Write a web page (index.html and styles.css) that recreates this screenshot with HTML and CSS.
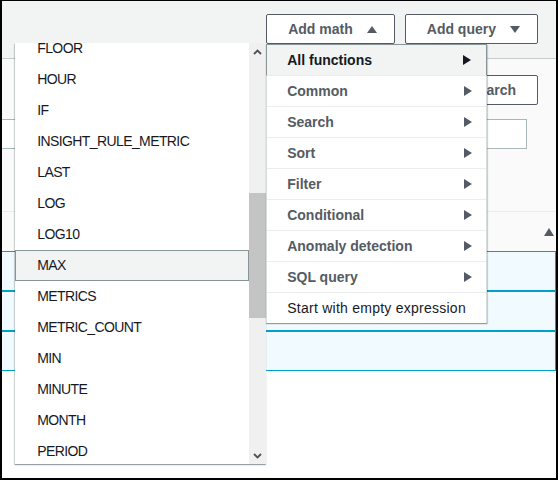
FILE: index.html
```html
<!DOCTYPE html>
<html lang="en">
<head>
    <meta charset="UTF-8">
    <meta name="viewport" content="width=device-width, initial-scale=1.0">
    <title>Add math</title>
    <link rel="stylesheet" href="styles.css">
</head>
<body>
    <div class="frame">
        <div class="toolbar">
            <div class="dropdown">
                <button class="btn">Add math
                    <svg width="10" height="7" viewBox="0 0 10 7"><polygon points="0,7 5,0 10,7" fill="#545b64"/></svg>
                </button>

                <!-- function list with its own scrollbar -->
                <div class="fnlist">
                    <ul class="fnitems">
                        <li class="first">FLOOR</li>
                        <li>HOUR</li>
                        <li>IF</li>
                        <li>INSIGHT_RULE_METRIC</li>
                        <li>LAST</li>
                        <li>LOG</li>
                        <li>LOG10</li>
                        <li class="hover">MAX</li>
                        <li>METRICS</li>
                        <li>METRIC_COUNT</li>
                        <li>MIN</li>
                        <li>MINUTE</li>
                        <li>MONTH</li>
                        <li>PERIOD</li>
                    </ul>
                    <div class="scrollbar">
                        <div class="sbbtn">
                            <svg width="9" height="6" viewBox="0 0 9 6"><polyline points="1,5 4.5,1.5 8,5" fill="none" stroke="#505050" stroke-width="1.8"/></svg>
                        </div>
                        <div class="sbtrack"><div class="sbthumb"></div></div>
                        <div class="sbbtn">
                            <svg width="9" height="6" viewBox="0 0 9 6"><polyline points="1,1 4.5,4.5 8,1" fill="none" stroke="#505050" stroke-width="1.8"/></svg>
                        </div>
                    </div>
                </div>

                <!-- category menu -->
                <ul class="submenu">
                    <li class="active">All functions <span class="arrow"></span></li>
                    <li>Common <span class="arrow"></span></li>
                    <li>Search <span class="arrow"></span></li>
                    <li>Sort <span class="arrow"></span></li>
                    <li>Filter <span class="arrow"></span></li>
                    <li>Conditional <span class="arrow"></span></li>
                    <li>Anomaly detection <span class="arrow"></span></li>
                    <li>SQL query <span class="arrow"></span></li>
                    <li class="plain">Start with empty expression</li>
                </ul>
            </div>
            <button class="btn query">Add query
                <svg width="10" height="7" viewBox="0 0 10 7"><polygon points="0,0 10,0 5,7" fill="#545b64"/></svg>
            </button>
        </div>

        <div class="panel">
            <div class="searchrow">
                <button class="btn">Search</button>
            </div>
            <div class="filter"></div>
            <div class="tablehead">
                <svg width="10" height="8" viewBox="0 0 10 8"><polygon points="0,8 5,0 10,8" fill="#545b64"/></svg>
            </div>
        </div>
        <div class="row"></div>
        <div class="row"></div>
        <div class="row"></div>
    </div>
</body>
</html>
```
FILE: styles.css
```css
*{
    box-sizing: border-box;
    margin: 0;
    padding: 0;
}
body{
    font-family: "Liberation Sans", Arial, sans-serif;
    font-size: 14px;
    color: #16191f;
    background-color: #fff;
}
ul{
    list-style: none;
}
.frame{
    position: relative;
    width: 558px;
    height: 480px;
    border: 2px solid #000;
    border-top-width: 1px;
    overflow: hidden;
    background-color: #fff;
}
.toolbar{
    display: flex;
    justify-content: flex-end;
    gap: 10px;
    height: 57px;
    padding: 13px 18px 0 0;
    background-color: #f2f3f3;
}
.dropdown{
    position: relative;
}
.btn{
    display: flex;
    align-items: center;
    gap: 14px;
    height: 30px;
    padding: 0 17px 0 21px;
    border: 1px solid #545b64;
    border-radius: 2px;
    background-color: #fff;
    color: #545b64;
    font-family: inherit;
    font-size: 14px;
    font-weight: bold;
}

/* left list */
.fnlist{
    position: absolute;
    top: 29px;
    right: 100%;
    width: 251px;
    height: 421px;
    display: flex;
    background-color: #fff;
    box-shadow: 0 1px 1px 0 rgba(0, 28, 36, .3), -1px 1px 1px 0 rgba(0, 28, 36, .15);
    z-index: 2;
}
.fnitems{
    flex: 1;
    overflow: hidden;
}
.fnitems li{
    height: 31px;
    line-height: 31px;
    padding-left: 22px;
    letter-spacing: -0.6px;
    white-space: nowrap;
}
.fnitems .first{
    margin-top: -10px;
}
.fnitems .hover{
    padding-left: 21px;
    line-height: 29px;
    background-color: #f2f3f3;
    border: 1px solid #879596;
}
.scrollbar{
    width: 17px;
    display: flex;
    flex-direction: column;
    background-color: #f0f0f0;
}
.sbbtn{
    height: 17px;
    display: flex;
    align-items: center;
    justify-content: center;
}
.sbtrack{
    flex: 1;
}
.sbthumb{
    margin-top: 133px;
    height: 125px;
    background-color: #c4c4c4;
}

/* right menu */
.submenu{
    position: absolute;
    top: 30px;
    left: 0;
    width: 221px;
    background-color: #fff;
    border-left: 1px solid #d5dbdb;
    border-right: 1px solid #d5dbdb;
    box-shadow: 0 1px 1px 0 rgba(0, 28, 36, .3), 1px 1px 1px 0 rgba(0, 28, 36, .15);
    z-index: 2;
}
.submenu li{
    display: flex;
    align-items: center;
    justify-content: space-between;
    height: 31px;
    padding: 0 14px 0 20px;
    border-bottom: 1px solid #eaeded;
    color: #545b64;
    font-weight: bold;
    white-space: nowrap;
}
.submenu .active{
    height: 32px;
    margin: 0 -1px;
    padding: 0 15px 0 20px;
    border: 1px solid #879596;
    border-bottom-color: #eaeded;
    background-color: #f2f3f3;
    color: #16191f;
}
.submenu .plain{
    color: #16191f;
    font-weight: normal;
    letter-spacing: 0.25px;
    border-bottom: none;
    height: 30px;
}
.arrow{
    width: 0;
    height: 0;
    border-top: 5px solid transparent;
    border-bottom: 5px solid transparent;
    border-left: 8px solid #545b64;
}
.active .arrow{
    border-left-color: #16191f;
}

/* page behind the menus */
.panel{
    background-color: #fafafa;
    border-top: 1px solid #c6cccc;
}
.searchrow{
    display: flex;
    justify-content: flex-end;
    padding: 16px 18px 0 0;
}
.searchrow .btn{
    padding: 0 21px;
}
.filter{
    height: 30px;
    margin: 14px 29px 0 0;
    background-color: #fff;
    border: 1px solid #aab7b8;
    border-left: none;
}
.tablehead{
    display: flex;
    justify-content: flex-end;
    align-items: center;
    height: 40px;
    margin-top: 62px;
    padding-right: 2px;
    border-top: 1px solid #eaeded;
}
.row{
    height: 40px;
    background-color: #f1faff;
    border: 1px solid #00a1c9;
    border-left: none;
}
```
